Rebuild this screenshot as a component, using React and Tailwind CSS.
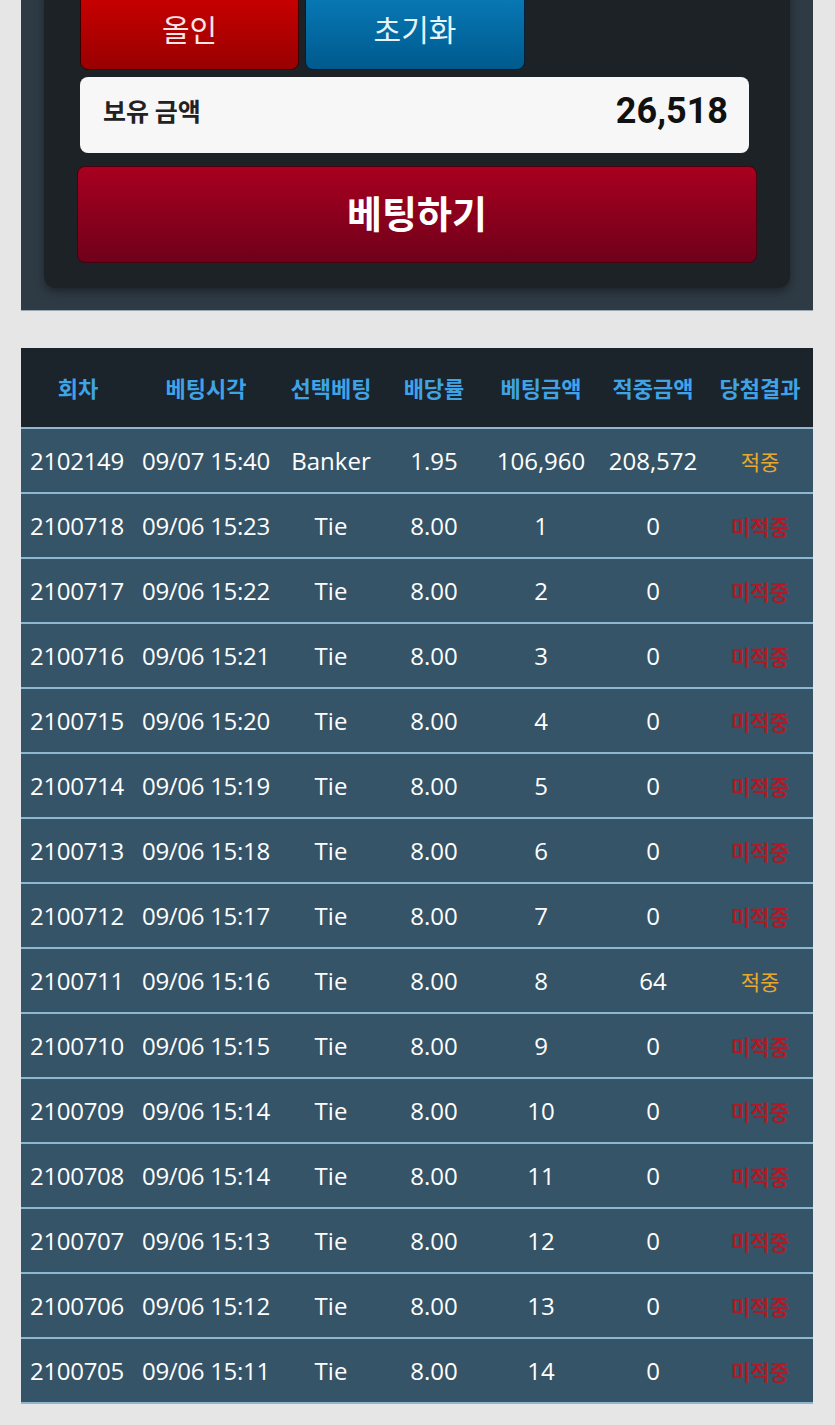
import React from 'react';

const rows = [
  ['2102149', '09/07 15:40', 'Banker', '1.95', '106,960', '208,572', true],
  ['2100718', '09/06 15:23', 'Tie', '8.00', '1', '0', false],
  ['2100717', '09/06 15:22', 'Tie', '8.00', '2', '0', false],
  ['2100716', '09/06 15:21', 'Tie', '8.00', '3', '0', false],
  ['2100715', '09/06 15:20', 'Tie', '8.00', '4', '0', false],
  ['2100714', '09/06 15:19', 'Tie', '8.00', '5', '0', false],
  ['2100713', '09/06 15:18', 'Tie', '8.00', '6', '0', false],
  ['2100712', '09/06 15:17', 'Tie', '8.00', '7', '0', false],
  ['2100711', '09/06 15:16', 'Tie', '8.00', '8', '64', true],
  ['2100710', '09/06 15:15', 'Tie', '8.00', '9', '0', false],
  ['2100709', '09/06 15:14', 'Tie', '8.00', '10', '0', false],
  ['2100708', '09/06 15:14', 'Tie', '8.00', '11', '0', false],
  ['2100707', '09/06 15:13', 'Tie', '8.00', '12', '0', false],
  ['2100706', '09/06 15:12', 'Tie', '8.00', '13', '0', false],
  ['2100705', '09/06 15:11', 'Tie', '8.00', '14', '0', false],
];

const headers = ['회차', '베팅시각', '선택베팅', '배당률', '베팅금액', '적중금액', '당첨결과'];

const cols = 'grid grid-cols-[114px_142px_108px_98px_116px_108px_106px]';

const font = { fontFamily: '"Open Sans", "Noto Sans CJK KR", sans-serif' };
const kr = { fontFamily: '"Noto Sans CJK KR", sans-serif' };

export default function App() {
  return (
    <div className="min-h-[1425px] bg-[#e6e6e6] overflow-hidden" style={kr}>
      <div className="mx-[21px] w-[792px] bg-[#2e3a44] border-b border-[#9aa6ae] pb-[22px]">
        <div className="mx-[23px] bg-[#1c2226] rounded-b-[12px] shadow-[0_4px_8px_rgba(0,0,0,0.35)] pl-[36px] pr-[41px] pb-[25px]">
          <div className="flex gap-[6px] -mt-[10px]">
            <button className="w-[219px] h-[80px] rounded-b-[8px] border border-[#3a0000] bg-gradient-to-b from-[#cc0000] to-[#990000] text-[#fde6e6] text-[30px] flex items-center justify-center pb-[4px]">
              올인
            </button>
            <button className="w-[220px] h-[80px] rounded-b-[8px] border border-[#00203a] bg-gradient-to-b from-[#0a7bb8] to-[#005a8e] text-[#e8f4fb] text-[30px] flex items-center justify-center pb-[4px]">
              초기화
            </button>
          </div>
          <div className="mt-[7px] h-[76px] rounded-[8px] bg-[#f7f7f7] flex items-center justify-between pl-[23px] pr-[21px] pb-[8px]">
            <span className="text-[25px] font-bold text-[#222]">보유 금액</span>
            <span className="text-[36px] font-bold text-[#111]" style={{ fontFamily: 'Roboto, sans-serif' }}>26,518</span>
          </div>
          <button className="mt-[13px] -ml-[3px] w-[680px] h-[97px] rounded-[8px] border border-[#4a0010] bg-gradient-to-b from-[#a8001f] to-[#70001a] text-white text-[38px] font-bold flex items-center justify-center pb-[6px]">
            베팅하기
          </button>
        </div>
      </div>

      <div className="mt-[37px] mx-[21px] w-[792px] bg-[#1b232b]">
        <div className={`${cols} h-[81px] items-center text-[#3fa3e6] text-[22px] font-bold border-b-2 border-[#8fb8d0]`}>
          {headers.map((h, i) => (
            <div key={i} className="text-center">{h}</div>
          ))}
        </div>
        {rows.map((r, idx) => (
          <div key={idx} className={`${cols} h-[65px] items-center bg-[#365467] border-b-2 border-[#8fb8d0] text-white text-[24px]`} style={font}>
            {r.slice(0, 6).map((c, i) => (
              <div key={i} className={i === 1 ? 'text-left pl-[7px] tracking-[-0.3px]' : i === 0 ? 'text-left pl-[9px] tracking-[-0.3px]' : 'text-center'}>{c}</div>
            ))}
            <div className="text-center">
              {r[6] ? (
                <span className="text-[#eaa82a] text-[21px]" style={kr}>적중</span>
              ) : (
                <span className="text-[#b01a26] text-[21px] font-bold" style={kr}>미적중</span>
              )}
            </div>
          </div>
        ))}
      </div>
    </div>
  );
}
